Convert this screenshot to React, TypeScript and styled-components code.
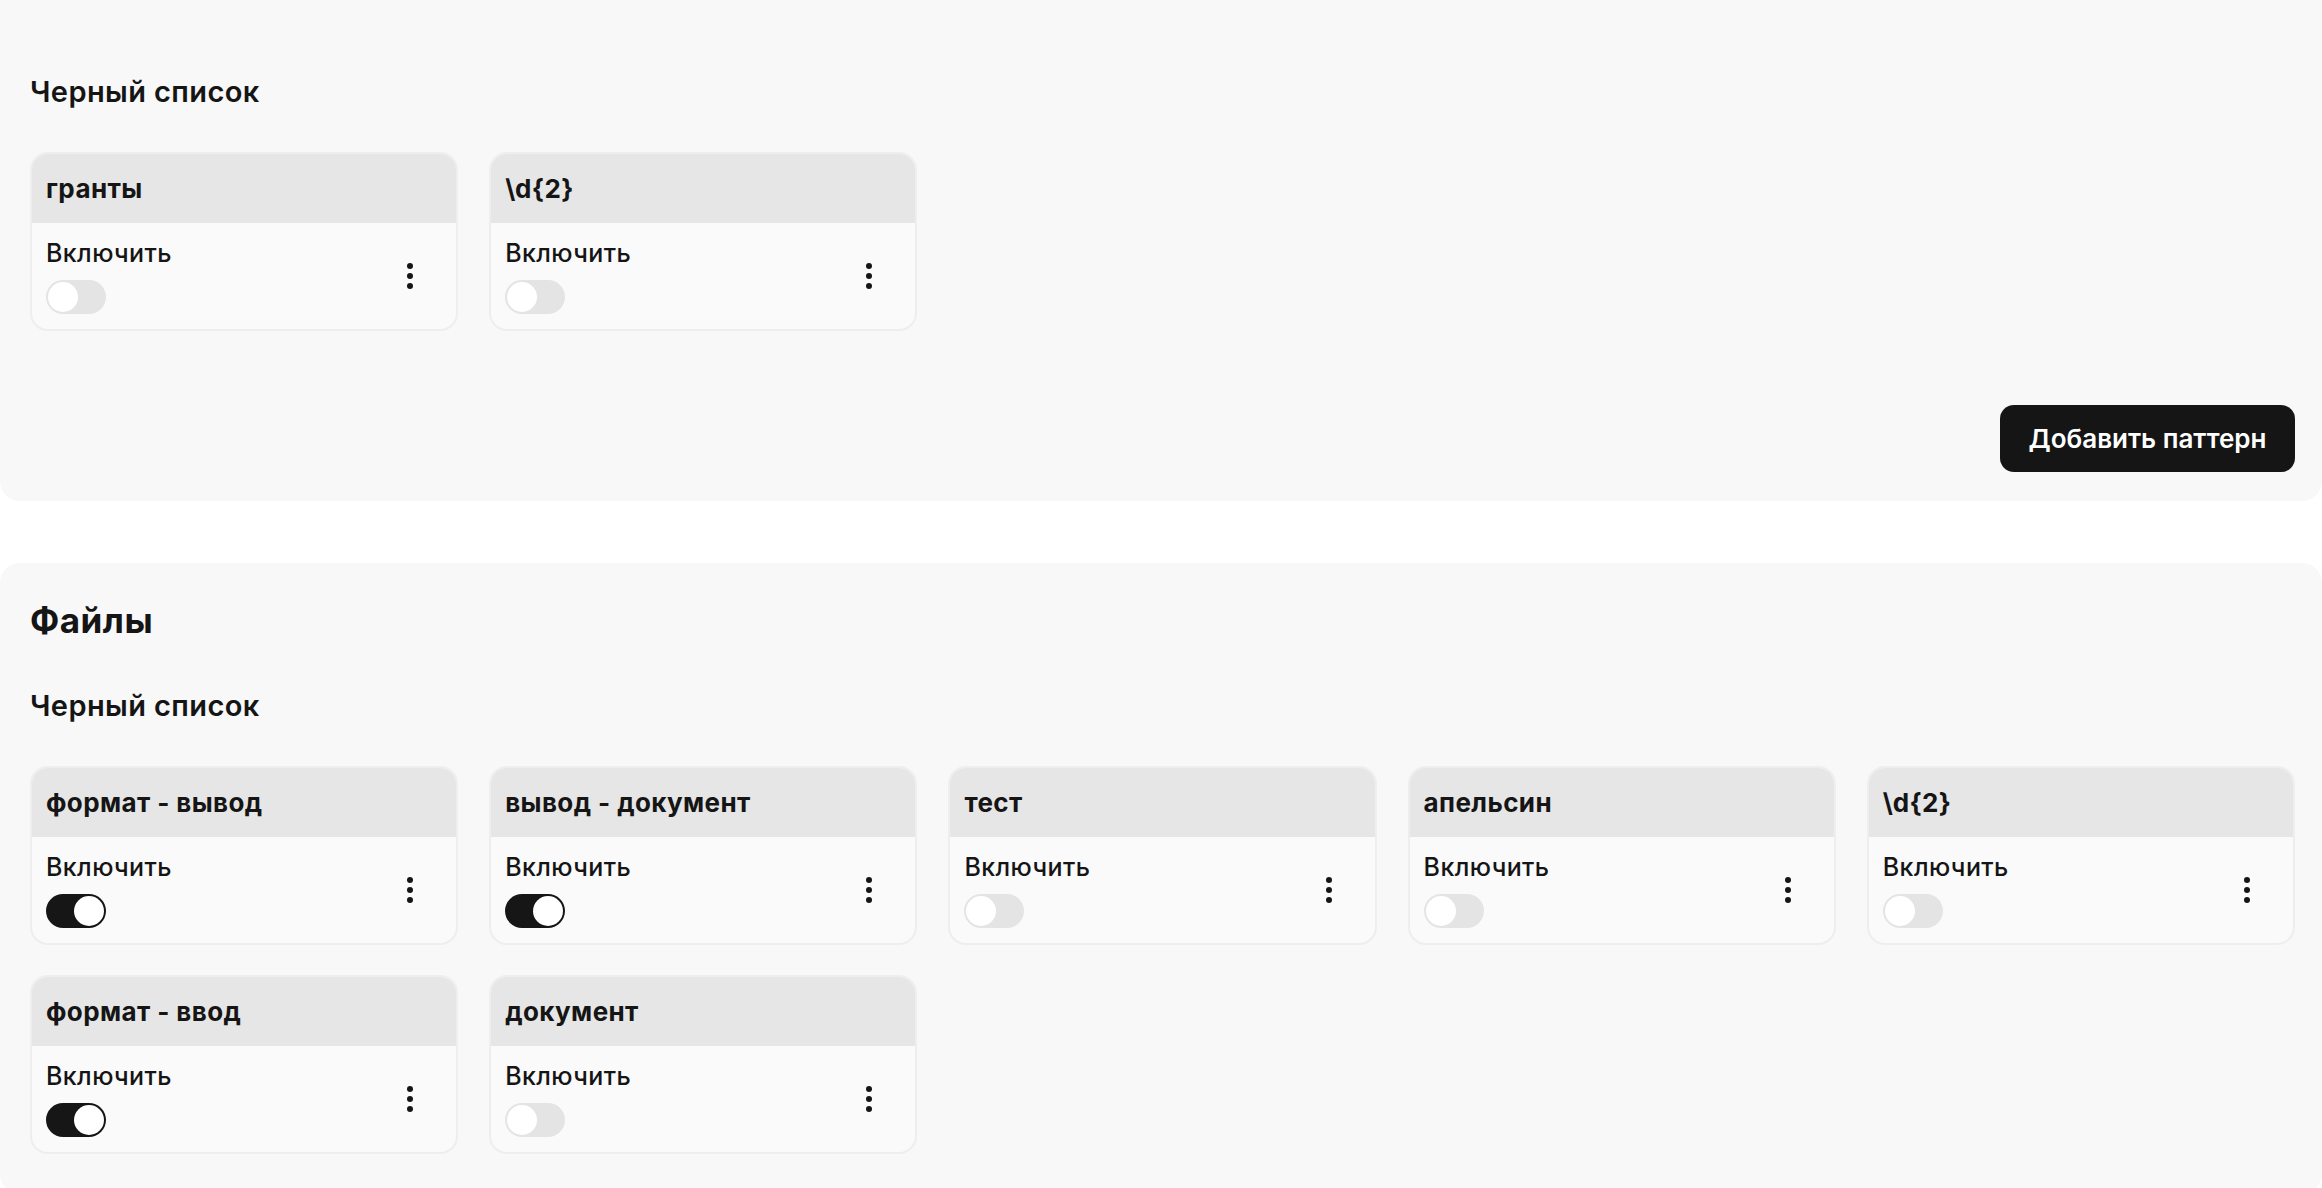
import { useState } from 'react'
import styled, { createGlobalStyle } from 'styled-components'

type Pattern = { id: string; name: string; enabled: boolean }

const textPatterns: Pattern[] = [
  { id: 't1', name: 'гранты', enabled: false },
  { id: 't2', name: '\\d{2}', enabled: false },
]

const filePatterns: Pattern[] = [
  { id: 'f1', name: 'формат - вывод', enabled: true },
  { id: 'f2', name: 'вывод - документ', enabled: true },
  { id: 'f3', name: 'тест', enabled: false },
  { id: 'f4', name: 'апельсин', enabled: false },
  { id: 'f5', name: '\\d{2}', enabled: false },
  { id: 'f6', name: 'формат - ввод', enabled: true },
  { id: 'f7', name: 'документ', enabled: false },
]

const PatternCard = ({ pattern }: { pattern: Pattern }) => {
  const [on, setOn] = useState(pattern.enabled)

  return (
    <Card>
      <CardHeader>{pattern.name}</CardHeader>
      <CardBody>
        <ToggleGroup>
          <ToggleLabel>Включить</ToggleLabel>
          <Switch $on={on} onClick={() => setOn(!on)} aria-label="Включить" />
        </ToggleGroup>
        <MenuButton aria-label="Меню">
          <svg width="6" height="26" viewBox="0 0 6 26">
            <circle cx="3" cy="3" r="3" fill="#151515" />
            <circle cx="3" cy="13" r="3" fill="#151515" />
            <circle cx="3" cy="23" r="3" fill="#151515" />
          </svg>
        </MenuButton>
      </CardBody>
    </Card>
  )
}

export default function App() {
  return (
    <>
      <GlobalStyle />
      <Page>
        <TopPanel>
          <SubTitle>Черный список</SubTitle>
          <CardGrid>
            {textPatterns.map((p) => (
              <PatternCard key={p.id} pattern={p} />
            ))}
          </CardGrid>
          <Footer>
            <AddButton>Добавить паттерн</AddButton>
          </Footer>
        </TopPanel>
        <Panel>
          <Title>Файлы</Title>
          <SubTitle>Черный список</SubTitle>
          <CardGrid>
            {filePatterns.map((p) => (
              <PatternCard key={p.id} pattern={p} />
            ))}
          </CardGrid>
        </Panel>
      </Page>
    </>
  )
}

const GlobalStyle = createGlobalStyle`
  body {
    margin: 0;
    background: #ffffff;
    font-family: Inter, "Noto Sans", sans-serif;
    color: #151515;
  }
`

const Page = styled.div`
  display: flex;
  flex-direction: column;
  gap: 62px;
`

const Panel = styled.section`
  background: #f8f8f8;
  border-radius: 20px;
  padding: 36px 27px 40px 30px;
  display: flex;
  flex-direction: column;
`

const TopPanel = styled(Panel)`
  border-radius: 0 0 20px 20px;
  padding-top: 75px;
  padding-bottom: 29px;
`

const Title = styled.h2`
  margin: 0 0 48px;
  font-size: 35px;
  line-height: 42px;
  font-weight: 700;
  letter-spacing: 0.5px;
`

const SubTitle = styled.h3`
  margin: 0 0 43px;
  font-size: 29px;
  line-height: 34px;
  font-weight: 600;
  letter-spacing: 0.4px;
`

const CardGrid = styled.div`
  display: grid;
  grid-template-columns: repeat(5, 1fr);
  gap: 30px 31px;
`

const Card = styled.div`
  background: #fafafa;
  border: 2px solid #eeeeee;
  border-radius: 18px;
  overflow: hidden;
  display: flex;
  flex-direction: column;
`

const CardHeader = styled.div`
  height: 69px;
  background: #e6e6e6;
  display: flex;
  align-items: center;
  padding: 0 14px;
  font-size: 26px;
  font-weight: 700;
  letter-spacing: 0.4px;
`

const CardBody = styled.div`
  display: flex;
  align-items: center;
  justify-content: space-between;
  padding: 15px 26px 15px 14px;
`

const ToggleGroup = styled.div`
  display: flex;
  flex-direction: column;
  align-items: flex-start;
  gap: 12px;
`

const ToggleLabel = styled.span`
  font-size: 25px;
  line-height: 30px;
  font-weight: 500;
  letter-spacing: 0.4px;
`

const Switch = styled.button<{ $on: boolean }>`
  position: relative;
  width: 60px;
  height: 34px;
  padding: 0;
  border: none;
  border-radius: 17px;
  background: ${(p) => (p.$on ? '#161616' : '#e4e4e4')};
  cursor: pointer;

  &::after {
    content: '';
    position: absolute;
    top: 2px;
    left: ${(p) => (p.$on ? '28px' : '2px')};
    width: 30px;
    height: 30px;
    border-radius: 50%;
    background: #ffffff;
    box-shadow: ${(p) => (p.$on ? '0 0 0 1px #161616' : 'none')};
  }
`

const MenuButton = styled.button`
  width: 40px;
  height: 40px;
  border: none;
  background: transparent;
  display: flex;
  align-items: center;
  justify-content: center;
  padding: 0;
  cursor: pointer;
`

const Footer = styled.div`
  display: flex;
  justify-content: flex-end;
  margin-top: 74px;
`

const AddButton = styled.button`
  width: 295px;
  height: 67px;
  padding: 0;
  border: none;
  border-radius: 14px;
  background: #151515;
  color: #ffffff;
  font-family: Inter, "Noto Sans", sans-serif;
  font-size: 26px;
  font-weight: 600;
  cursor: pointer;
`
